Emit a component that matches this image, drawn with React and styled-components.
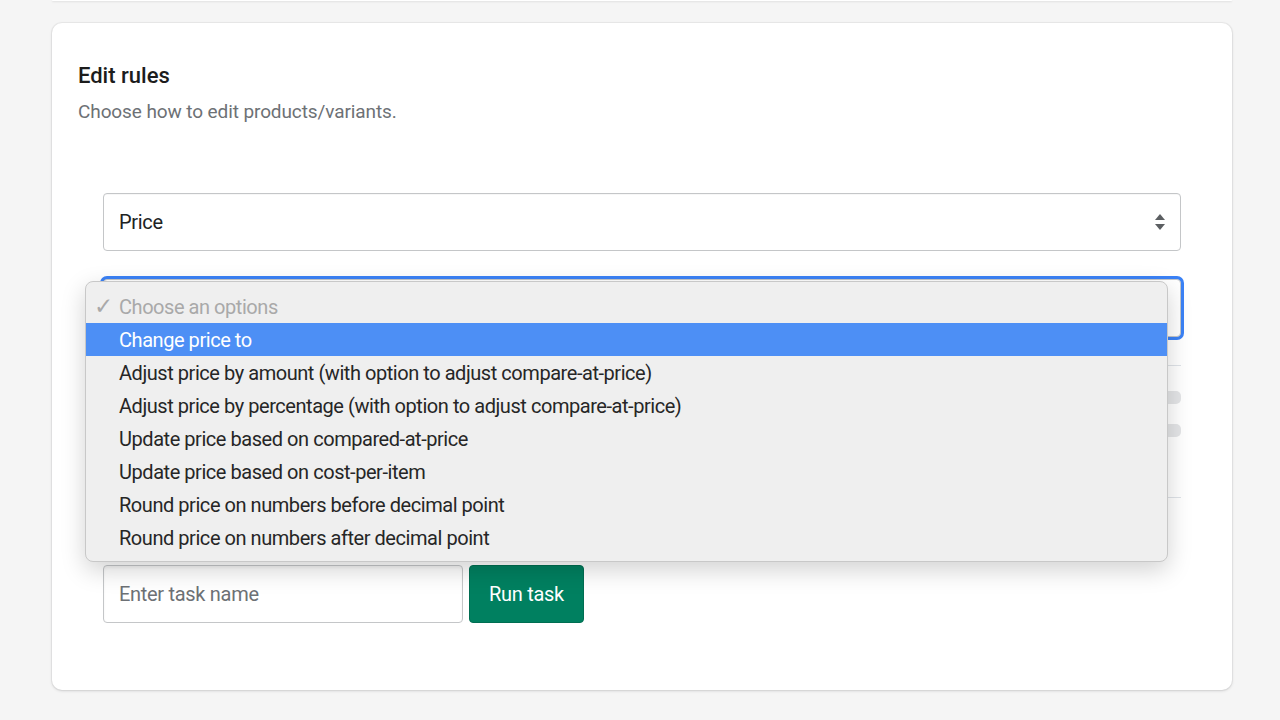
import React from "react";
import styled, { createGlobalStyle } from "styled-components";

const GlobalStyle = createGlobalStyle`
  body {
    margin: 0;
    background: #f5f5f5;
    font-family: Roboto, "Liberation Sans", sans-serif;
    color: #202223;
  }
`;

const Page = styled.div`
  padding: 0 48px 30px 52px;
  display: flex;
  flex-direction: column;
  gap: 22px;
`;

const TopCard = styled.div`
  height: 1px;
  background: #fff;
  box-shadow: 0 1px 2px rgba(0, 0, 0, 0.12);
  border-radius: 0 0 10px 10px;
`;

const Card = styled.div`
  background: #fff;
  border-radius: 10px;
  box-shadow: 0 0 0 1px rgba(63, 63, 68, 0.05), 0 1px 3px rgba(63, 63, 68, 0.18);
  padding: 38px 26px 67px;
`;

const Title = styled.h2`
  margin: 0;
  font-size: 22px;
  font-weight: 500;
  line-height: 30px;
  color: #1c1c1c;
`;

const Subtitle = styled.p`
  margin: 8px 0 0;
  font-size: 19px;
  line-height: 26px;
  letter-spacing: -0.1px;
  color: #6d7175;
`;

const Section = styled.div`
  margin-top: 68px;
  padding: 0 25px;
  display: flex;
  flex-direction: column;
`;

const SelectWrap = styled.div`
  position: relative;
  margin-top: ${(p) => p.$gap || 0}px;
`;

const SelectBox = styled.div`
  height: 58px;
  box-sizing: border-box;
  border: 1px solid #c4c6c8;
  border-radius: 4px;
  display: flex;
  align-items: center;
  justify-content: space-between;
  padding: 0 14px 0 15px;
  font-size: 20px;
  letter-spacing: -0.3px;
  color: #202223;
  background: #fff;
  box-shadow: ${(p) => (p.$focused ? "0 0 0 3px #3b82f6" : "inset 0 1px 0 rgba(0,0,0,0.03)")};
`;

const Divider = styled.div`
  height: 1px;
  background: #dfe3e8;
  margin-top: ${(p) => p.$top}px;
`;

const Bar = styled.div`
  height: 13px;
  border-radius: 5px;
  background: #e4e5e7;
  margin-top: ${(p) => p.$top}px;
`;

const TaskRow = styled.div`
  display: flex;
  gap: 6px;
  margin-top: 67px;
`;

const TaskInput = styled.input`
  width: 360px;
  height: 58px;
  box-sizing: border-box;
  border: 1px solid #c4c6c8;
  border-radius: 4px;
  padding: 0 15px;
  font-family: inherit;
  font-size: 20px;
  letter-spacing: -0.3px;
  color: #202223;
  box-shadow: inset 0 2px 3px rgba(0, 0, 0, 0.05);
  &::placeholder {
    color: #6d7175;
  }
`;

const RunButton = styled.button`
  height: 58px;
  padding: 0 19px;
  background: #008060;
  border: 1px solid #006e52;
  border-radius: 4px;
  color: #fff;
  font-family: inherit;
  font-size: 20px;
  font-weight: 400;
  letter-spacing: -0.3px;
`;

const Popup = styled.div`
  position: absolute;
  left: -18px;
  top: 2px;
  width: 1083px;
  box-sizing: border-box;
  padding: 8px 0 7px;
  background: #efefef;
  border: 1px solid #c8c8c8;
  border-radius: 8px;
  box-shadow: 0 8px 24px rgba(0, 0, 0, 0.18);
  z-index: 10;
`;

const Option = styled.div`
  height: 33px;
  display: flex;
  align-items: center;
  padding-left: 33px;
  position: relative;
  font-size: 20px;
  letter-spacing: -0.45px;
  color: ${(p) => (p.$active ? "#fff" : p.$muted ? "#a9a9a9" : "#262626")};
  background: ${(p) => (p.$active ? "#4d8ff5" : "transparent")};
`;

const Check = styled.span`
  position: absolute;
  left: 8px;
  font-size: 23px;
  color: #a9a9a9;
`;

const Arrows = () => (
  <svg width="12" height="20" viewBox="0 0 12 20">
    <path d="M6 2 L11 8 H1 Z" fill="#5c5f62" />
    <path d="M6 18 L11 12 H1 Z" fill="#5c5f62" />
  </svg>
);

const options = [
  "Change price to",
  "Adjust price by amount (with option to adjust compare-at-price)",
  "Adjust price by percentage (with option to adjust compare-at-price)",
  "Update price based on compared-at-price",
  "Update price based on cost-per-item",
  "Round price on numbers before decimal point",
  "Round price on numbers after decimal point",
];

export default function App() {
  return (
    <>
      <GlobalStyle />
      <Page>
        <TopCard />
        <Card>
          <Title>Edit rules</Title>
          <Subtitle>Choose how to edit products/variants.</Subtitle>
          <Section>
            <SelectWrap>
              <SelectBox>
                <span>Price</span>
                <Arrows />
              </SelectBox>
            </SelectWrap>
            <SelectWrap $gap={28}>
              <SelectBox $focused>
                <span>Change price to</span>
                <Arrows />
              </SelectBox>
              <Popup>
                <Option $muted>
                  <Check>✓</Check>
                  Choose an options
                </Option>
                {options.map((o, i) => (
                  <Option key={o} $active={i === 0}>
                    {o}
                  </Option>
                ))}
              </Popup>
            </SelectWrap>
            <Divider $top={28} />
            <Bar $top={25} />
            <Bar $top={20} />
            <Divider $top={60} />
            <TaskRow>
              <TaskInput placeholder="Enter task name" />
              <RunButton>Run task</RunButton>
            </TaskRow>
          </Section>
        </Card>
      </Page>
    </>
  );
}
